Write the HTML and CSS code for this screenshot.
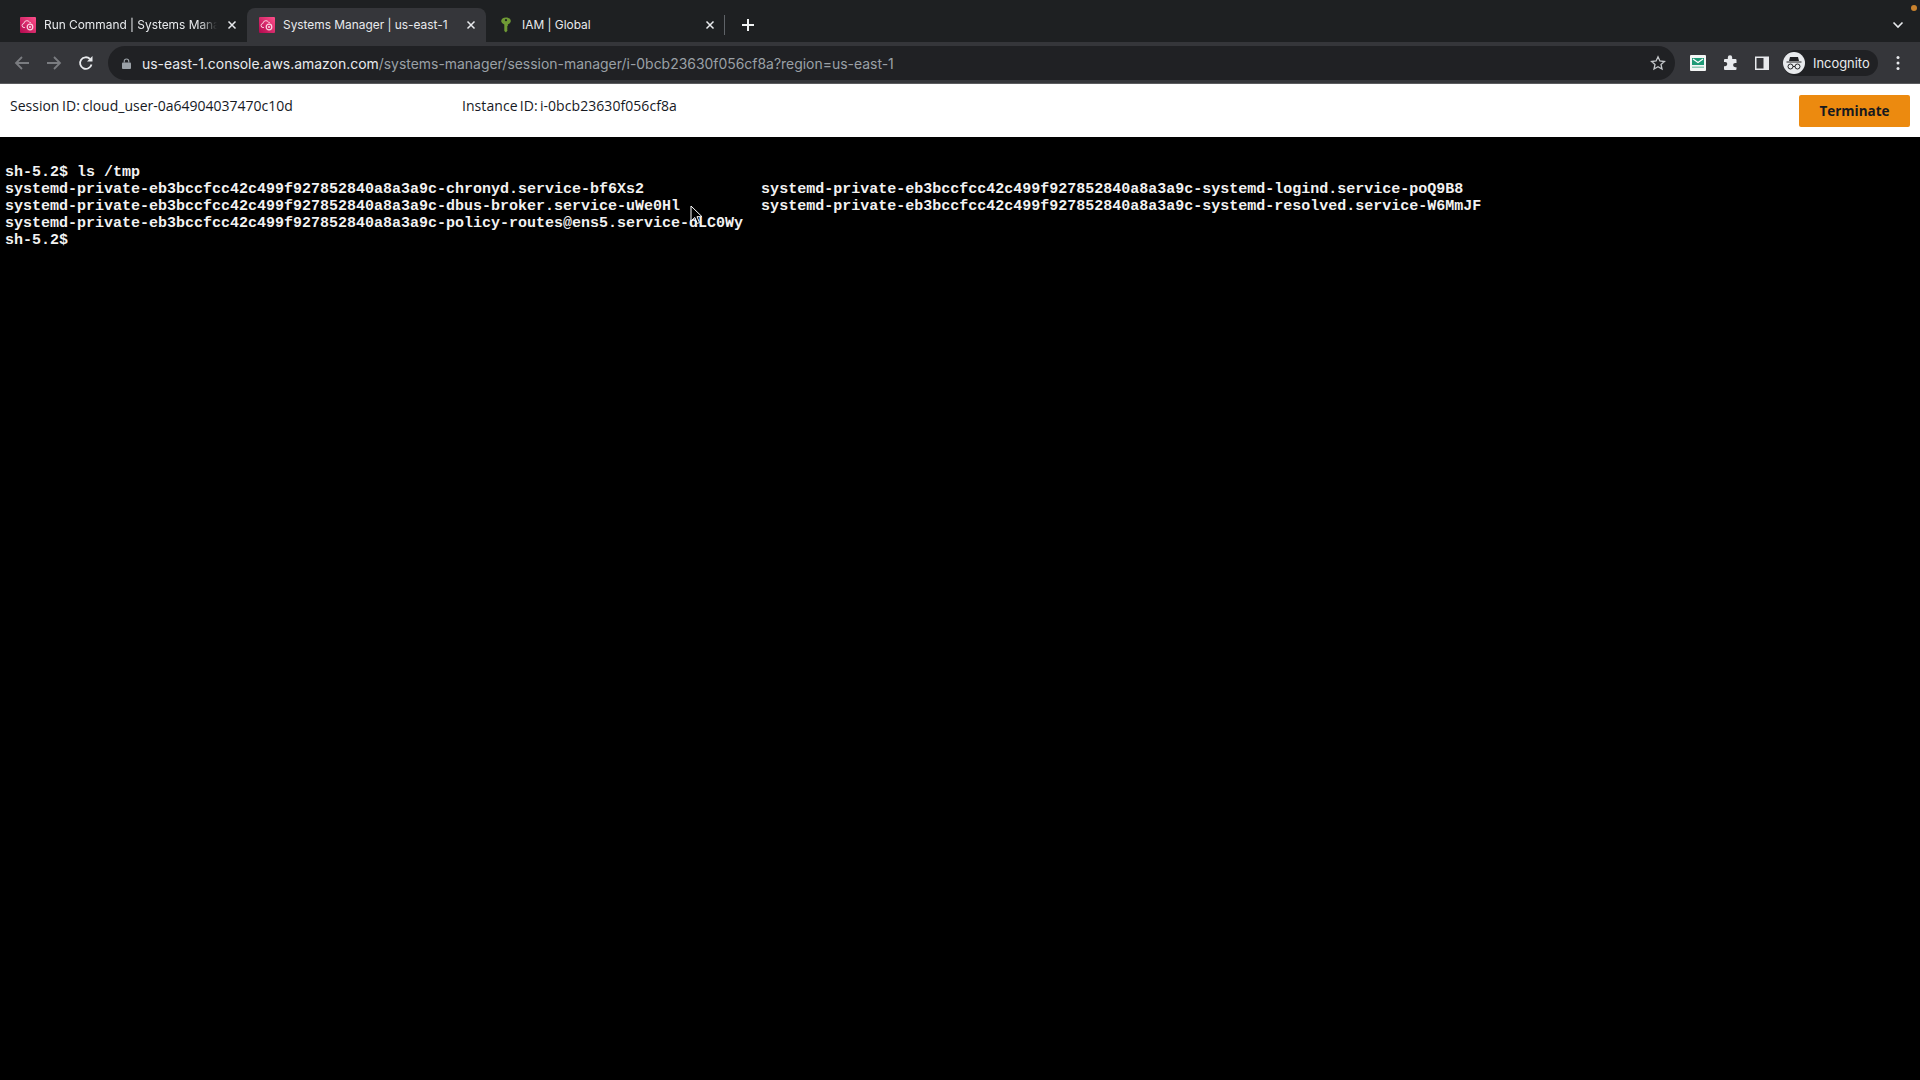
FILE: index.html
```html
<!DOCTYPE html>
<html lang="en">
<head>
<meta charset="utf-8">
<title>Systems Manager | us-east-1</title>
<link rel="stylesheet" href="styles.css">
</head>
<body>
<div class="tabstrip">
  <div class="tab">
    <svg class="favicon" viewBox="0 0 16 16"><defs><linearGradient id="pink" x1="0" y1="1" x2="1" y2="0"><stop offset="0" stop-color="#b0084d"/><stop offset="1" stop-color="#ff4f8b"/></linearGradient></defs><rect width="16" height="16" rx="1" fill="url(#pink)"/><path d="M5 10.500H4.200a2 2 0 0 1-.3-4A3 3 0 0 1 9.500 5.200a2 2 0 0 1 1.600.9" fill="none" stroke="#fbd5e3" stroke-width="1"/><circle cx="10" cy="10" r="2.800" fill="none" stroke="#fbd5e3" stroke-width="1.200"/><circle cx="10" cy="10" r="1" fill="#fbd5e3"/></svg>
    <span class="tab-title tab-title-fade">Run Command | Systems Manager</span>
    <svg class="close" viewBox="0 0 10 10"><path d="M1.500 1.500l7 7M8.500 1.500l-7 7"/></svg>
  </div>
  <div class="tab tab-active">
    <svg class="favicon" viewBox="0 0 16 16"><rect width="16" height="16" rx="1" fill="url(#pink)"/><path d="M5 10.500H4.200a2 2 0 0 1-.3-4A3 3 0 0 1 9.500 5.200a2 2 0 0 1 1.600.9" fill="none" stroke="#fbd5e3" stroke-width="1"/><circle cx="10" cy="10" r="2.800" fill="none" stroke="#fbd5e3" stroke-width="1.200"/><circle cx="10" cy="10" r="1" fill="#fbd5e3"/></svg>
    <span class="tab-title">Systems Manager | us-east-1</span>
    <svg class="close" viewBox="0 0 10 10"><path d="M1.500 1.500l7 7M8.500 1.500l-7 7"/></svg>
  </div>
  <div class="tab">
    <svg class="favicon" viewBox="0 0 16 16"><path d="M8 .5c3 0 4.800 1.600 4.800 3.600 0 1.600-1.300 2.800-3 3.300V9l-1 .9 1 1-1 1 .9 1L8 15.500l-1.700-1.400V7.400C4.500 6.900 3.200 5.700 3.200 4.100 3.200 2.100 5 .5 8 .5z" fill="#6f9a35"/><circle cx="8" cy="3.200" r="1.100" fill="#1e2022"/></svg>
    <span class="tab-title">IAM | Global</span>
    <svg class="close" viewBox="0 0 10 10"><path d="M1.500 1.500l7 7M8.500 1.500l-7 7"/></svg>
  </div>
  <div class="tab-sep"></div>
  <svg class="newtab" viewBox="0 0 12 12"><path d="M6 0v12M0 6h12"/></svg>
  <svg class="tabsearch" viewBox="0 0 12 8"><path d="M1.500 1.500L6 6l4.500-4.500"/></svg>
  <span class="rec-dot"></span>
</div>
<div class="toolbar">
  <svg class="nav nav-off" viewBox="0 0 16 16"><path d="M15 8H2M8 2L2 8l6 6"/></svg>
  <svg class="nav nav-off" viewBox="0 0 16 16"><path d="M1 8h13M8 2l6 6-6 6"/></svg>
  <svg class="nav" viewBox="0 0 16 16"><path d="M13.500 9.500A5.800 5.800 0 1 1 12 4"/><path class="solid" d="M14.500 1v5.500H9z"/></svg>
  <div class="omnibox">
    <svg class="lock" viewBox="0 0 10 12"><path d="M2.500 5V3.500a2.500 2.500 0 0 1 5 0V5" fill="none" stroke="#9aa0a6" stroke-width="1.300"/><rect y="5" width="10" height="7" rx="1" fill="#9aa0a6"/></svg>
    <span class="url"><span class="host">us-east-1.console.aws.amazon.com</span>/systems-manager/session-manager/i-0bcb23630f056cf8a?region=us-east-1</span>
    <svg class="star" viewBox="0 0 16 16"><path d="M8 1.800l1.900 4.200 4.500.5-3.400 3 1 4.500L8 11.700 4 14l1-4.500-3.400-3 4.500-.5z"/></svg>
  </div>
  <div class="tools">
    <svg class="ext" viewBox="0 0 16 16"><rect width="16" height="16" rx="1" fill="#f4f6f5"/><rect x="2" y="3" width="12" height="7" fill="#1f9a76"/><path d="M3 4l5 3.500L13 4" fill="none" stroke="#fff" stroke-width="1.200"/><rect x="2" y="11.500" width="12" height="1.500" fill="#8fc9b5"/></svg>
    <svg class="ext" viewBox="0 0 16 16"><path d="M5.800 2.500a2.200 2.200 0 0 1 4.400 0V4h3.300a1 1 0 0 1 1 1v3h-1.300a2.100 2.100 0 0 0 0 4.200h1.300V14a1 1 0 0 1-1 1H3a1 1 0 0 1-1-1v-2.800h1.200a2.100 2.100 0 0 0 0-4.200H2V5a1 1 0 0 1 1-1h2.800z" fill="#e8eaed"/></svg>
    <svg class="ext" viewBox="0 0 16 16"><rect x="1" y="1.500" width="14" height="13.500" fill="#e8eaed"/><rect x="2.500" y="3" width="7" height="10.500" fill="#35363a"/></svg>
    <div class="profile">
      <svg class="avatar" viewBox="0 0 22 22"><circle cx="11" cy="11" r="11" fill="#e8eaed"/><path d="M7 5h8l1 4H6zM3.500 9.500h15v1h-15z" fill="#202124"/><circle cx="7.500" cy="14.500" r="2.500" fill="none" stroke="#202124" stroke-width="1"/><circle cx="14.500" cy="14.500" r="2.500" fill="none" stroke="#202124" stroke-width="1"/><path d="M10 14.500h2" stroke="#202124"/></svg>
      <span class="profile-name">Incognito</span>
    </div>
    <svg class="menu" viewBox="0 0 4 16"><circle cx="2" cy="2.500" r="1.500"/><circle cx="2" cy="8" r="1.500"/><circle cx="2" cy="13.500" r="1.500"/></svg>
  </div>
</div>
<header class="session">
  <div class="session-id">Session ID: cloud_user-0a64904037470c10d</div>
  <div class="instance-id">Instance ID: i-0bcb23630f056cf8a</div>
  <button class="terminate">Terminate</button>
</header>
<main class="terminal">
<pre class="term-text">sh-5.2$ ls /tmp
systemd-private-eb3bccfcc42c499f927852840a8a3a9c-chronyd.service-bf6Xs2             systemd-private-eb3bccfcc42c499f927852840a8a3a9c-systemd-logind.service-poQ9B8
systemd-private-eb3bccfcc42c499f927852840a8a3a9c-dbus-broker.service-uWe0Hl         systemd-private-eb3bccfcc42c499f927852840a8a3a9c-systemd-resolved.service-W6MmJF
systemd-private-eb3bccfcc42c499f927852840a8a3a9c-policy-routes@ens5.service-dLC0Wy
sh-5.2$</pre>
<svg class="pointer" viewBox="0 0 14 20"><path d="M1 1v15l3.800-3.500 2.500 6 2.200-1-2.500-5.800H12z"/></svg>
</main>
</body>
</html>
```
FILE: styles.css
```css
* { box-sizing: border-box; }
html, body { margin: 0; height: 100%; }
body {
  width: 1920px;
  height: 1080px;
  overflow: hidden;
  display: flex;
  flex-direction: column;
  background: #000;
  font-family: "Liberation Sans", Arial, sans-serif;
}
.tabstrip {
  position: relative;
  flex: 0 0 42px;
  display: flex;
  align-items: flex-end;
  padding-left: 8px;
  background: #1e2022;
}
.tab {
  width: 239px;
  height: 34px;
  display: flex;
  align-items: center;
  padding: 0 10px 1px 12px;
  border-radius: 8px 8px 0 0;
  color: #e8eaed;
}
.tab-active { background: #35363a; }
.favicon { width: 16px; height: 16px; flex: none; }
.tab-title {
  flex: 1;
  min-width: 0;
  margin: 0 10px 0 8px;
  font: 11.900px "Inter", "Liberation Sans", sans-serif;
  white-space: nowrap;
  overflow: hidden;
}
.tab-title-fade {
  -webkit-mask-image: linear-gradient(90deg, #000 90%, transparent 100%);
  mask-image: linear-gradient(90deg, #000 90%, transparent 100%);
}
.close { width: 10px; height: 10px; flex: none; fill: none; stroke: #e8eaed; stroke-width: 1.500; }
.tab-sep { width: 1px; height: 20px; margin: 0 0 7px -1px; background: #5f6368; }
.newtab { width: 12px; height: 12px; margin: 0 0 11px 17px; fill: none; stroke: #f1f3f4; stroke-width: 2; }
.tabsearch { position: absolute; right: 16px; top: 21px; width: 12px; height: 8px; fill: none; stroke: #e8eaed; stroke-width: 1.600; }
.rec-dot { position: absolute; right: 3px; top: 5px; width: 6px; height: 6px; border-radius: 50%; background: #c9822e; }
.toolbar {
  flex: 0 0 42px;
  display: flex;
  align-items: center;
  padding: 1px 0 0 14px;
  background: #35363a;
  border-bottom: 1px solid #5a5b5e;
}
.nav { width: 16px; height: 16px; flex: none; margin-right: 16px; fill: none; stroke: #e8eaed; stroke-width: 1.800; }
.nav-off { stroke: #7a7c80; }
.nav .solid { fill: #e8eaed; stroke: none; }
.omnibox {
  width: 1567px;
  height: 34px;
  margin-left: -2px;
  display: flex;
  align-items: center;
  padding: 0 9px 0 14px;
  border-radius: 17px;
  background: #202124;
}
.lock { width: 9px; height: 11px; flex: none; }
.url {
  flex: 1;
  margin-left: 11px;
  font: 13.950px "Inter", "Liberation Sans", sans-serif;
  color: #9aa0a6;
  white-space: nowrap;
}
.host { color: #e8eaed; }
.star { width: 16px; height: 16px; flex: none; fill: none; stroke: #c4c7ca; stroke-width: 1.300; }
.tools { display: flex; align-items: center; margin-left: 15px; }
.ext { width: 16px; height: 16px; flex: none; margin-right: 16px; }
.profile {
  width: 95px;
  height: 26px;
  margin-left: -3px;
  display: flex;
  align-items: center;
  border-radius: 13px;
  background: #202124;
}
.avatar { width: 22px; height: 22px; flex: none; }
.profile-name { margin-left: 8px; font: 12.900px "Inter", "Liberation Sans", sans-serif; color: #e8eaed; }
.menu { width: 4px; height: 16px; margin-left: 18px; fill: #e8eaed; }
.session {
  flex: 0 0 53px;
  display: flex;
  align-items: flex-start;
  padding: 11px 10px 0;
  background: #fff;
  color: #16191f;
  font: 14px/20px "Open Sans", "Liberation Sans", sans-serif;
  word-spacing: -1px;
}
.session-id { width: 452px; margin-top: 1px; }
.instance-id { flex: 1; margin-top: 1px; letter-spacing: 0.06px; word-spacing: -1.500px; }
.terminate {
  width: 111px;
  height: 32px;
  padding: 0;
  border: 0;
  border-radius: 2px;
  background: #ec8a0f;
  color: #16191f;
  font: bold 13.500px "Open Sans", "Liberation Sans", sans-serif;
}
.terminal { position: relative; flex: 1; padding: 27px 0 0 5px; background: #000; }
.term-text {
  margin: 0;
  color: #f2f2f2;
  font: bold 15px/17px "Liberation Mono", "Courier New", monospace;
}
.pointer {
  position: absolute;
  left: 690px;
  top: 68px;
  width: 14px;
  height: 20px;
  fill: #000;
  stroke: #fff;
  stroke-width: 1;
}
```
